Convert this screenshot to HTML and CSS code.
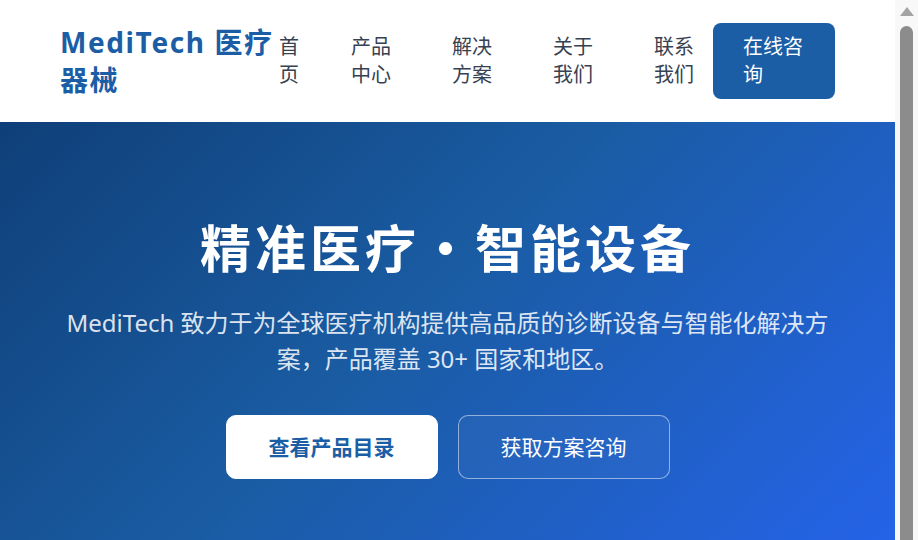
FILE: index.html
```html
<!DOCTYPE html>
<html lang="zh-CN">
<head>
<meta charset="utf-8">
<title>MediTech 医疗器械</title>
<link rel="stylesheet" href="styles.css">
</head>
<body>
<div class="page">
  <header class="site-header">
    <div class="logo">MediTech 医疗器械</div>
    <nav class="nav">
      <div class="nav-item nav-item-home"><a class="nav-link" href="#">首页</a></div>
      <div class="nav-item"><a class="nav-link" href="#">产品中心</a></div>
      <div class="nav-item"><a class="nav-link" href="#">解决方案</a></div>
      <div class="nav-item"><a class="nav-link" href="#">关于我们</a></div>
      <div class="nav-item nav-item-last"><a class="nav-link" href="#">联系我们</a></div>
      <a class="nav-cta" href="#">在线咨询</a>
    </nav>
  </header>
  <section class="hero">
    <h1 class="hero-title">精准医疗・智能设备</h1>
    <p class="hero-text">MediTech 致力于为全球医疗机构提供高品质的诊断设备与智能化解决方案，产品覆盖 30+ 国家和地区。</p>
    <div class="hero-actions">
      <a class="btn btn-primary" href="#">查看产品目录</a>
      <a class="btn btn-outline" href="#">获取方案咨询</a>
    </div>
  </section>
</div>
<div class="scrollbar" aria-hidden="true">
  <div class="scroll-arrow"></div>
  <div class="scroll-thumb"></div>
</div>
</body>
</html>
```
FILE: styles.css
```css
* { box-sizing: border-box; }
html, body { margin: 0; padding: 0; }
body {
  font-family: "Noto Sans", "Noto Sans CJK SC", sans-serif;
  background: #ffffff;
  color: #1f2937;
}
a { text-decoration: none; }

.page { margin-right: 23px; }

.site-header {
  display: flex;
  justify-content: space-between;
  align-items: center;
  padding: 23px 60px;
  background: #ffffff;
}
.logo {
  width: 216px;
  flex: none;
  font-size: 28px;
  line-height: 38px;
  font-weight: 700;
  letter-spacing: 1.6px;
  color: #1b5ea6;
}
.nav {
  display: flex;
  align-items: center;
  flex: none;
}
.nav-item { width: 101px; flex: none; }
.nav-item-home { width: 72px; }
.nav-item-last { width: 59px; }
.nav-link {
  display: block;
  width: 2.1em;
  font-size: 20px;
  line-height: 28px;
  color: #374151;
}
.nav-item-home .nav-link { width: 1.1em; }
.nav-cta {
  display: block;
  width: 122px;
  padding: 10px 30px;
  font-size: 20px;
  line-height: 28px;
  color: #ffffff;
  background: #1b5ea6;
  border-radius: 8px;
}

.hero {
  padding: 95px 60px 96px;
  text-align: center;
  color: #ffffff;
  background: linear-gradient(135deg, #0f3f78 0%, #1a5ca3 45%, #2563eb 100%);
}
.hero-title {
  margin: 0 0 26px;
  font-size: 51px;
  line-height: 62px;
  letter-spacing: 4px;
  font-weight: 700;
}
.hero-text {
  margin: 0 0 38px;
  font-size: 24px;
  line-height: 36px;
  color: rgba(255, 255, 255, 0.86);
}
.hero-actions {
  display: flex;
  justify-content: center;
  gap: 20px;
}
.btn {
  display: block;
  padding: 16px 42px;
  border: 1px solid transparent;
  border-radius: 10px;
  font-size: 21px;
  line-height: 30px;
}
.btn-primary {
  background: #ffffff;
  border-color: #ffffff;
  color: #1b5ea6;
  font-weight: 700;
}
.btn-outline {
  color: #ffffff;
  border-color: rgba(255, 255, 255, 0.5);
  background: rgba(255, 255, 255, 0.03);
}

.scrollbar {
  position: fixed;
  top: 0;
  right: 0;
  width: 23px;
  height: 100%;
  background: #f8f8f8;
  display: flex;
  flex-direction: column;
  align-items: center;
  padding-top: 7px;
}
.scroll-arrow {
  width: 0;
  height: 0;
  border-left: 7px solid transparent;
  border-right: 7px solid transparent;
  border-bottom: 9px solid #a3a3a3;
}
.scroll-thumb {
  flex: 1;
  width: 13px;
  margin-top: 10px;
  background: #8c8c8c;
  border-radius: 7px 7px 0 0;
}
```
